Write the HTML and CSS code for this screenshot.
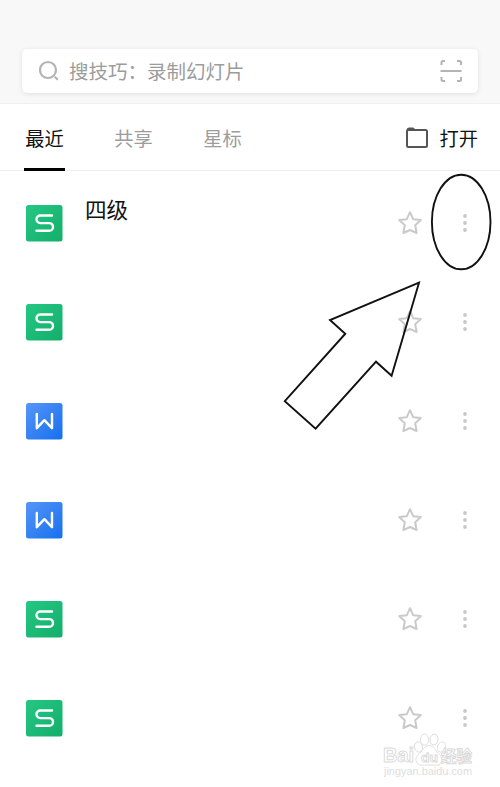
FILE: index.html
```html
<!DOCTYPE html>
<html lang="zh-CN">
  <head>
    <meta charset="utf-8">
    <title>最近</title>
    <link rel="stylesheet" href="styles.css">
  </head>
  <body>
    <svg class="defs" width="0" height="0">
      <defs>
        <linearGradient id="green" x1="0" y1="0" x2="1" y2="1">
          <stop offset="0" stop-color="#25c784"/>
          <stop offset="1" stop-color="#13ae6a"/>
        </linearGradient>
        <linearGradient id="blue" x1="0" y1="0" x2="1" y2="1">
          <stop offset="0" stop-color="#5795f8"/>
          <stop offset="1" stop-color="#1670ee"/>
        </linearGradient>
      </defs>
      <symbol id="sheet" viewBox="0 0 37 37">
        <rect width="36.500" height="36.500" rx="2.500" fill="url(#green)"/>
        <path d="M26 10.500H14.300a3.800 3.800 0 0 0 0 7.600h8.900a3.800 3.800 0 0 1 0 7.600H10.500" fill="none" stroke="#fff" stroke-width="2.400" stroke-linecap="round"/>
      </symbol>
      <symbol id="doc" viewBox="0 0 37 37">
        <rect width="36.500" height="36.500" rx="2.500" fill="url(#blue)"/>
        <path d="M10.800 11v14.200l7.600-8 7.600 8V11" fill="none" stroke="#fff" stroke-width="2.400" stroke-linecap="round" stroke-linejoin="round"/>
      </symbol>
      <symbol id="star" viewBox="0 0 26 26">
        <path d="M13 2.200l3.200 7 7.600.9-5.600 5.200 1.400 7.700-6.600-3-6.600 3 1.400-7.700-5.600-5.200 7.600-.9z" fill="none" stroke="#cacaca" stroke-width="2" stroke-linejoin="round"/>
      </symbol>
      <symbol id="more" viewBox="0 0 6 20">
        <g fill="#c8c8c8">
          <circle cx="3" cy="3" r="1.900"/>
          <circle cx="3" cy="10" r="1.900"/>
          <circle cx="3" cy="17" r="1.900"/>
        </g>
      </symbol>
    </svg>

    <div class="header">
      <div class="search">
        <svg width="22" height="22" viewBox="0 0 22 22" fill="none" stroke="#b4b4b4" stroke-width="2.200">
          <circle cx="9" cy="10" r="8"/>
          <path d="M15.800 16.800l3 3"/>
        </svg>
        <span class="placeholder">搜技巧：录制幻灯片</span>
        <svg width="22" height="22" viewBox="0 0 22 22" fill="none" stroke="#b4b4b4" stroke-width="2">
          <path d="M1.500 5V2.500Q1.500 1 3 1H5M17 1h2.500Q21 1 21 2.500V5M21 17v2.500q0 1.500-1.500 1.500H17M5 21H3Q1.500 21 1.500 19.500V17M.5 11h21"/>
        </svg>
      </div>
    </div>

    <div class="tabs">
      <span class="tab active">最近</span>
      <span class="tab">共享</span>
      <span class="tab">星标</span>
      <span class="open">
        <svg width="22" height="22" viewBox="0 0 22 22">
          <path d="M1 3Q1 1 3 1H7.500L9.500 3.500H1z" fill="#555" stroke="#555"/>
          <rect x="1" y="3" width="20" height="17" rx="1.500" fill="none" stroke="#555" stroke-width="2"/>
        </svg>
        打开
      </span>
    </div>

    <div class="list">
      <div class="row">
        <svg class="icon"><use href="#sheet"/></svg>
        <span class="name">四级</span>
        <svg class="star"><use href="#star"/></svg>
        <svg class="more"><use href="#more"/></svg>
      </div>
      <div class="row">
        <svg class="icon"><use href="#sheet"/></svg>
        <span class="name"></span>
        <svg class="star"><use href="#star"/></svg>
        <svg class="more"><use href="#more"/></svg>
      </div>
      <div class="row">
        <svg class="icon"><use href="#doc"/></svg>
        <span class="name"></span>
        <svg class="star"><use href="#star"/></svg>
        <svg class="more"><use href="#more"/></svg>
      </div>
      <div class="row">
        <svg class="icon"><use href="#doc"/></svg>
        <span class="name"></span>
        <svg class="star"><use href="#star"/></svg>
        <svg class="more"><use href="#more"/></svg>
      </div>
      <div class="row">
        <svg class="icon"><use href="#sheet"/></svg>
        <span class="name"></span>
        <svg class="star"><use href="#star"/></svg>
        <svg class="more"><use href="#more"/></svg>
      </div>
      <div class="row">
        <svg class="icon"><use href="#sheet"/></svg>
        <span class="name"></span>
        <svg class="star"><use href="#star"/></svg>
        <svg class="more"><use href="#more"/></svg>
      </div>
    </div>

    <!-- circle and arrow pointing at the menu -->
    <svg class="marks" width="500" height="787" viewBox="0 0 500 787" fill="none" stroke="#111" stroke-width="1.900">
      <ellipse cx="461.200" cy="222" rx="29.300" ry="47.300"/>
      <path d="M419 282.700L330 320l15.300 13.700L284.800 401.200l30.800 27.500 60.400-67 15.600 14z"/>
    </svg>

    <svg class="watermark" width="100" height="50" viewBox="0 0 100 50">
      <g fill="#fff" stroke="#dadada" stroke-width=".9">
        <ellipse cx="38.500" cy="16" rx="4" ry="5.200" transform="rotate(-15 38.500 16)"/>
        <ellipse cx="44.500" cy="8.500" rx="4" ry="5.500"/>
        <ellipse cx="54" cy="8.500" rx="4" ry="5.500" transform="rotate(10 54 8.500)"/>
        <ellipse cx="61.500" cy="16" rx="4" ry="5.200" transform="rotate(22 61.500 16)"/>
        <path d="M49 14.500c5 0 6 5 9.500 8 3 2.500 4.500 5 3 8.500-2 4.500-6 3-12.500 3S38.500 35.500 36.500 31c-1.500-3.500 0-6 3-8.500 3.500-3 4.500-8 9.500-8z"/>
        <text class="wm-logo" x="3" y="30.500" textLength="31" lengthAdjust="spacingAndGlyphs">Bai</text>
        <text class="wm-cn" x="61" y="30.500">经验</text>
        <text class="wm-du" x="41" y="30.500" textLength="17" lengthAdjust="spacingAndGlyphs">du</text>
      </g>
      <text class="wm-url" x="4" y="43.500" textLength="88" lengthAdjust="spacingAndGlyphs">jingyan.baidu.com</text>
    </svg>
  </body>
</html>
```

FILE: styles.css
```css
body {
  position: relative;
  width: 500px;
  height: 787px;
  margin: 0;
  overflow: hidden;
  background: #fff;
  font-family: "Noto Sans CJK SC", sans-serif;
  font-size: 19.3px;
  line-height: 28px;
}
svg {
  display: block;
  flex: none;
}
.defs {
  position: absolute;
}
.header {
  box-sizing: border-box;
  height: 104px;
  padding: 49px 22px 0;
  background: #f8f8f8;
  border-bottom: 1px solid #f0f0f0;
}
.search {
  display: flex;
  align-items: center;
  box-sizing: border-box;
  height: 44px;
  padding: 0 16px 0 17px;
  background: #fff;
  border-radius: 5px;
  box-shadow: 0 1px 5px rgba(0, 0, 0, 0.1);
}
.placeholder {
  flex: 1;
  margin-left: 8px;
  color: #9c9c9c;
  font-size: 19.5px;
}
.tabs {
  display: flex;
  box-sizing: border-box;
  height: 67px;
  padding: 0 22px 0 24px;
  border-bottom: 1px solid #eee;
}
.tab {
  box-sizing: border-box;
  width: 41px;
  height: 67px;
  margin-right: 48px;
  padding-top: 20px;
  color: #9c9c9c;
  text-align: center;
  white-space: nowrap;
}
.active {
  color: #111;
  border-bottom: 3px solid #000;
}
.open {
  display: flex;
  align-items: center;
  gap: 11px;
  height: 28px;
  margin-top: 20px;
  margin-left: auto;
  color: #111;
}
.list {
  padding-top: 3px;
}
.row {
  display: flex;
  align-items: center;
  height: 99px;
  padding: 0 32px 0 26px;
}
.icon {
  width: 37px;
  height: 37px;
}
.name {
  flex: 1;
  margin: 0 0 29px 22px;
  color: #111;
  font-size: 21.6px;
}
.star {
  width: 26px;
  height: 26px;
  margin-bottom: 2px;
}
.more {
  width: 6px;
  height: 20px;
  margin: 0 0 1px 39px;
}
.marks {
  position: absolute;
  top: 0;
  left: 0;
}
.watermark {
  position: absolute;
  top: 731px;
  left: 380px;
}
.wm-logo {
  font: bold 20px "Liberation Sans", sans-serif;
}
.wm-cn {
  font: bold 15.5px "Noto Sans CJK SC", sans-serif;
}
.wm-du {
  font: bold 13px "Liberation Sans", sans-serif;
}
.wm-url {
  fill: #dedede;
  font: 10px "Liberation Sans", sans-serif;
}
```
